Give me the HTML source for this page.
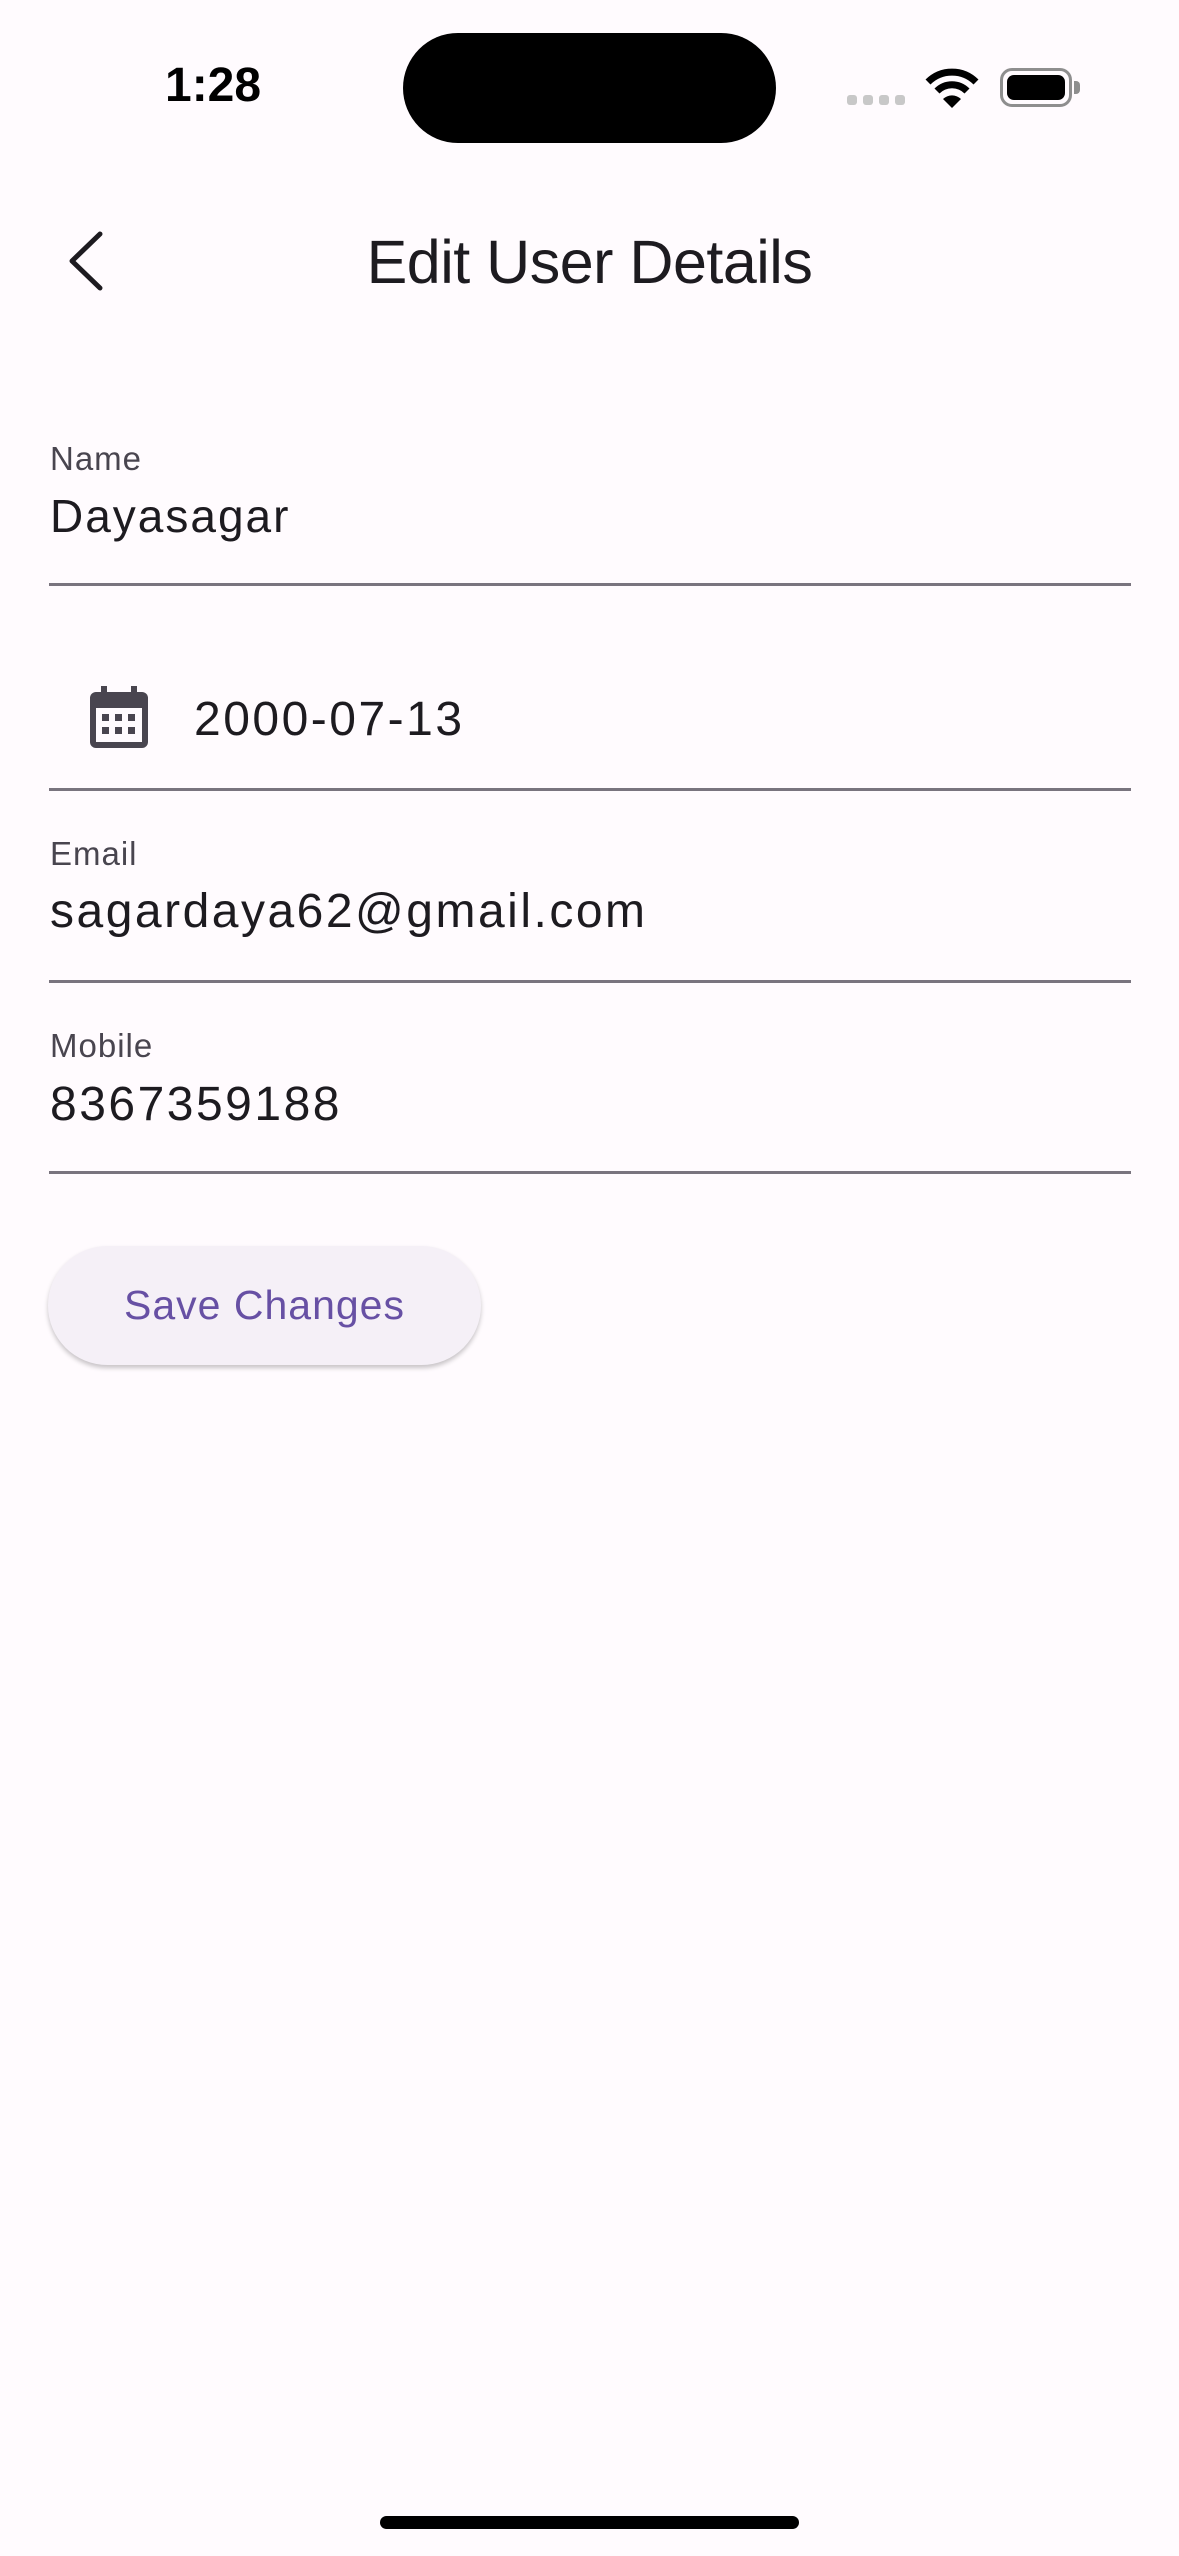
<!DOCTYPE html>
<html><head><meta charset="utf-8"><style>
*{margin:0;padding:0;box-sizing:border-box}
body{width:1179px;height:2556px;background:#fffbfe;position:relative;overflow:hidden;font-family:"Liberation Sans",sans-serif;color:#1d1b20}
.a{position:absolute}
.lbl{position:absolute;left:50px;font-size:33px;color:#49454f;letter-spacing:1px;line-height:1}
.val{position:absolute;left:50px;font-size:48px;color:#1d1b20;letter-spacing:2.5px;line-height:1}
.line{position:absolute;left:49px;width:1082px;height:3px;background:#79747e}
</style></head><body>
<div class="a" style="left:165px;top:62px;font-size:48px;font-weight:bold;line-height:1;color:#000">1:28</div>
<div class="a" style="left:403px;top:33px;width:373px;height:110px;border-radius:55px;background:#000"></div>
<div class="a" style="left:847px;top:95px;width:10px;height:10px;border-radius:3px;background:#c8c8c8"></div>
<div class="a" style="left:863px;top:95px;width:10px;height:10px;border-radius:3px;background:#c8c8c8"></div>
<div class="a" style="left:879px;top:95px;width:10px;height:10px;border-radius:3px;background:#c8c8c8"></div>
<div class="a" style="left:895px;top:95px;width:10px;height:10px;border-radius:3px;background:#c8c8c8"></div>
<svg class="a" style="left:925px;top:68px" width="54" height="40" viewBox="0 0 54 40">
<path d="M3 14 A34 34 0 0 1 51 14" stroke="#000" stroke-width="7" fill="none"/>
<path d="M12 23 A21 21 0 0 1 42 23" stroke="#000" stroke-width="7" fill="none"/>
<path d="M18 31 L27 40 L36 31 A13 13 0 0 0 18 31Z" fill="#000"/>
</svg>
<div class="a" style="left:1000px;top:68px;width:72px;height:39px;border:3px solid #8e8e8e;border-radius:12px;padding:4px"><div style="width:100%;height:100%;background:#000;border-radius:7px"></div></div>
<div class="a" style="left:1074px;top:81px;width:6px;height:13px;background:#8e8e8e;border-radius:0 4px 4px 0"></div>
<svg class="a" style="left:60px;top:228px" width="50" height="66" viewBox="0 0 50 66"><path d="M40 6 L12 33 L40 60" stroke="#1d1b20" stroke-width="5" fill="none" stroke-linecap="round" stroke-linejoin="round"/></svg>
<div class="a" style="left:0;width:1179px;text-align:center;top:232px;font-size:61px;line-height:1;color:#1d1b20;letter-spacing:-0.5px">Edit User Details</div>
<div class="lbl" style="top:442px">Name</div>
<div class="val" style="top:493px;font-size:46px;letter-spacing:2px">Dayasagar</div>
<div class="line" style="top:583px"></div>
<svg class="a" style="left:90px;top:686px" width="58" height="62" viewBox="0 0 58 62">
<rect x="0" y="6" width="58" height="56" rx="6" fill="#49454f"/>
<rect x="11" y="0" width="6" height="12" fill="#49454f"/><rect x="41" y="0" width="6" height="12" fill="#49454f"/>
<rect x="6" y="22" width="46" height="34" fill="#fffbfe"/>
<g fill="#49454f"><rect x="12" y="28" width="7" height="7"/><rect x="25" y="28" width="7" height="7"/><rect x="38" y="28" width="7" height="7"/><rect x="12" y="41" width="7" height="7"/><rect x="25" y="41" width="7" height="7"/><rect x="38" y="41" width="7" height="7"/></g>
</svg>
<div class="val" style="left:194px;top:696px">2000-07-13</div>
<div class="line" style="top:788px"></div>
<div class="lbl" style="top:837px">Email</div>
<div class="val" style="top:888px">sagardaya62@gmail.com</div>
<div class="line" style="top:980px"></div>
<div class="lbl" style="top:1029px">Mobile</div>
<div class="val" style="top:1081px">8367359188</div>
<div class="line" style="top:1171px"></div>
<div class="a" style="left:48px;top:1246px;width:433px;height:119px;border-radius:60px;background:#f5f0f7;box-shadow:0 3px 5px rgba(0,0,0,0.22);text-align:center;line-height:119px;font-size:41px;color:#6750a4;letter-spacing:1px">Save Changes</div>
<div class="a" style="left:380px;top:2516px;width:419px;height:13px;border-radius:7px;background:#000"></div>
</body></html>
